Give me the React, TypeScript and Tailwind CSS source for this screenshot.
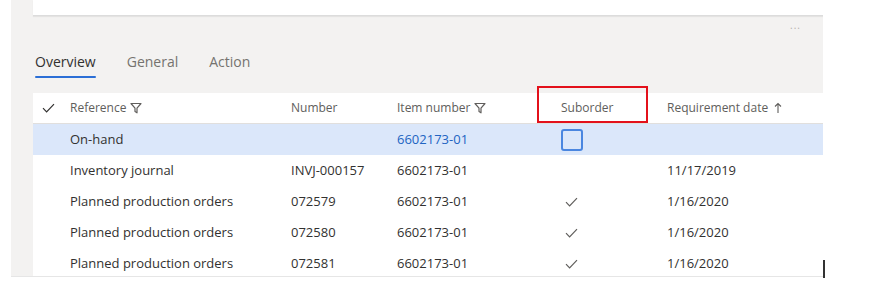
import React from 'react';

interface Row {
  reference: string;
  number: string;
  item: string;
  suborder: 'box' | 'check' | '';
  date: string;
  selected?: boolean;
}

const rows: Row[] = [
  { reference: 'On-hand', number: '', item: '6602173-01', suborder: 'box', date: '', selected: true },
  { reference: 'Inventory journal', number: 'INVJ-000157', item: '6602173-01', suborder: '', date: '11/17/2019' },
  { reference: 'Planned production orders', number: '072579', item: '6602173-01', suborder: 'check', date: '1/16/2020' },
  { reference: 'Planned production orders', number: '072580', item: '6602173-01', suborder: 'check', date: '1/16/2020' },
  { reference: 'Planned production orders', number: '072581', item: '6602173-01', suborder: 'check', date: '1/16/2020' },
];

const cols = 'grid grid-cols-[37px_221px_106px_164px_106px_1fr]';

function Check({ className = '' }: { className?: string }) {
  return (
    <svg width="13" height="10" viewBox="0 0 13 10" className={className}>
      <path d="M1 5.2 L4.6 8.8 L12 1.2" fill="none" stroke="currentColor" strokeWidth="1.2" />
    </svg>
  );
}

function Funnel() {
  return (
    <svg width="12" height="12" viewBox="0 0 12 12" className="ml-1 text-[#605e5c]">
      <path d="M1 1.5 H11 L7 6.2 V10.8 L5 9.6 V6.2 Z" fill="none" stroke="currentColor" strokeWidth="1.2" strokeLinejoin="round" />
    </svg>
  );
}

export default function App() {
  return (
    <div className="w-[872px] h-[298px] bg-white font-['Open_Sans',sans-serif] relative">
      <div className="ml-[11px] w-[812px] h-[277px] bg-[#f3f2f1] pl-[22px] flex flex-col overflow-hidden">
        {/* top card */}
        <div className="shrink-0 h-[16px] bg-white border-b border-[#dcdcdc] shadow-[0_1px_1px_rgba(0,0,0,0.06)]" />
        <div className="shrink-0 h-[20px] flex justify-end pr-[22px] pt-[4px] text-[10px] leading-none text-[#b3b0ad] tracking-[1px]">
          ...
        </div>

        {/* tabs */}
        <div className="shrink-0 flex items-end gap-[31px] pl-[2px] h-[42px]">
          <div className="flex flex-col">
            <span className="text-[14px] leading-[18px] text-[#323130]">Overview</span>
            <div className="mt-[5px] h-[2px] bg-[#2b6fd6] rounded" />
          </div>
          <span className="text-[14px] leading-[18px] text-[#75736f] pb-[7px]">General</span>
          <span className="text-[14px] leading-[18px] text-[#75736f] pb-[7px]">Action</span>
        </div>
        <div className="shrink-0 h-[15px]" />

        {/* table */}
        <div className="flex-1 min-h-0 bg-white">
          <div className={`${cols} h-[31px] items-center border-b border-[#e1dfdd] text-[12px] text-[#605e5c] bg-white`}>
            <div className="pl-[9px] text-[#323130]">
              <Check />
            </div>
            <div className="flex items-center">Reference<Funnel /></div>
            <div>Number</div>
            <div className="flex items-center">Item number<Funnel /></div>
            <div className="relative h-full flex items-center">
              Suborder
              <div className="absolute left-[-24px] top-[-7px] w-[111px] h-[37px] border-2 border-[#e3111b]" />
            </div>
            <div className="flex items-center">
              Requirement date
              <svg width="8" height="12" viewBox="0 0 8 12" className="ml-[6px] text-[#605e5c]">
                <path d="M4 11 V1.5 M1 4.5 L4 1.5 L7 4.5" fill="none" stroke="currentColor" strokeWidth="1.1" />
              </svg>
            </div>
          </div>
          {rows.map((r, i) => (
            <div
              key={i}
              className={`${cols} h-[31px] items-center text-[13px] text-[#323130] ${r.selected ? 'bg-[#dbe7fa]' : 'bg-white'}`}
            >
              <div />
              <div>{r.reference}</div>
              <div>{r.number}</div>
              <div className={r.selected ? 'text-[#2164c2]' : ''}>{r.item}</div>
              <div className="flex items-center">
                {r.suborder === 'box' && (
                  <div className="w-[22px] h-[22px] rounded-[3px] border-2 border-[#4a86e0]" />
                )}
                {r.suborder === 'check' && <Check className="ml-[4px] text-[#605e5c]" />}
              </div>
              <div>{r.date}</div>
            </div>
          ))}
        </div>
      </div>
      <div className="absolute left-[11px] top-[276px] w-[812px] h-[1px] bg-[#e6e6e6]" />
      <div className="absolute left-[823px] top-[260px] w-[2px] h-[18px] bg-[#333]" />
    </div>
  );
}
